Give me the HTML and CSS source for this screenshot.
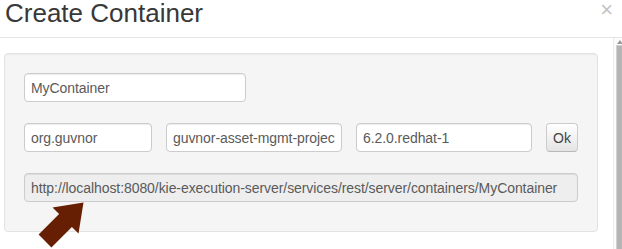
FILE: index.html
```html
<!DOCTYPE html>
<html>
<head>
<meta charset="utf-8">
<link rel="stylesheet" href="styles.css">
</head>
<body>
<div class="modal-header">
  <h1 class="title">Create Container</h1>
  <span class="close">×</span>
</div>
<div class="main">
  <div class="content">
    <div class="well">
      <div class="row">
        <input class="field w-name" type="text" value="MyContainer">
      </div>
      <div class="row">
        <input class="field w-group" type="text" value="org.guvnor">
        <input class="field w-wide" type="text" value="guvnor-asset-mgmt-project">
        <input class="field w-wide" type="text" value="6.2.0.redhat-1">
        <button class="btn">Ok</button>
      </div>
      <div class="row">
        <input class="field w-url" type="text" value="http://localhost:8080/kie-execution-server/services/rest/server/containers/MyContainer" disabled>
      </div>
    </div>
  </div>
  <div class="scrollbar">
    <div class="scroll-arrow"></div>
    <div class="scroll-thumb"></div>
  </div>
</div>
<svg class="pointer" width="622" height="249" viewBox="0 0 622 249">
  <polygon points="38.6,234.6 59.1,214.1 52.5,207.5 83.5,202.5 78.5,233.5 71.9,226.9 51.4,247.4" fill="#661f02"/>
</svg>
</body>
</html>
```

FILE: styles.css
```css
html, body {
  margin: 0;
  padding: 0;
  background: #ffffff;
  width: 622px;
  height: 249px;
  overflow: hidden;
  font-family: "Liberation Sans", Arial, sans-serif;
}

.modal-header {
  height: 37px;
  border-bottom: 1px solid #e5e5e5;
  display: flex;
  justify-content: space-between;
  align-items: flex-start;
}

.title {
  margin: 0;
  padding: 2px 0 0 5px;
  font-size: 26px;
  line-height: 22px;
  font-weight: normal;
  color: #383838;
}

.close {
  font-size: 22px;
  line-height: 14px;
  padding-top: 3px;
  color: #c4c4c4;
  margin-right: 9px;
}

.main {
  display: flex;
  height: 211px;
}

.content {
  flex: 1;
  padding-top: 15px;
  padding-left: 4px;
}

.well {
  width: 594px;
  box-sizing: border-box;
  background: #f5f5f5;
  border: 1px solid #e3e3e3;
  border-radius: 4px;
  box-shadow: inset 0 1px 1px rgba(0, 0, 0, 0.05);
  padding: 19px 19px 29px 19px;
  display: flex;
  flex-direction: column;
  gap: 21px;
}

.row {
  display: flex;
  gap: 14px;
}

.field {
  box-sizing: border-box;
  height: 29px;
  margin: 0;
  padding: 0 6px;
  border: 1px solid #cccccc;
  border-radius: 4px;
  background: #ffffff;
  box-shadow: inset 0 1px 1px rgba(0, 0, 0, 0.075);
  font-family: "Liberation Sans", Arial, sans-serif;
  font-size: 14px;
  letter-spacing: -0.07px;
  color: #5a5a5a;
  outline: none;
}

.field:disabled {
  background: #eeeeee;
  color: #5a5a5a;
  -webkit-text-fill-color: #5a5a5a;
  opacity: 1;
}

.w-name { width: 222px; }
.w-group { width: 128px; }
.w-wide { width: 176px; }
.w-url { width: 555px; }

.btn {
  box-sizing: border-box;
  width: 33px;
  height: 29px;
  margin: 0;
  padding: 0;
  border: 1px solid #cccccc;
  border-bottom-color: #b8b8b8;
  border-radius: 4px;
  background: linear-gradient(#ffffff, #e4e4e4);
  font-family: "Liberation Sans", Arial, sans-serif;
  font-size: 14px;
  color: #444444;
}

.scrollbar {
  width: 9px;
  box-sizing: border-box;
  border-left: 1px solid #ececec;
  background: #fbfbfb;
  display: flex;
  flex-direction: column;
}

.scroll-arrow {
  height: 7px;
  position: relative;
}

.scroll-arrow::after {
  content: "";
  position: absolute;
  left: 3px;
  top: 2px;
  border-left: 3px solid transparent;
  border-right: 3px solid transparent;
  border-bottom: 4px solid #9a9a9a;
}

.scroll-thumb {
  flex: 1;
  margin-left: 2px;
  background: #b4b4b4;
  border-left: 1px solid #d0d0d0;
  border-top: 1px solid #d0d0d0;
}

.pointer {
  position: absolute;
  left: 0;
  top: 0;
  pointer-events: none;
}
```
